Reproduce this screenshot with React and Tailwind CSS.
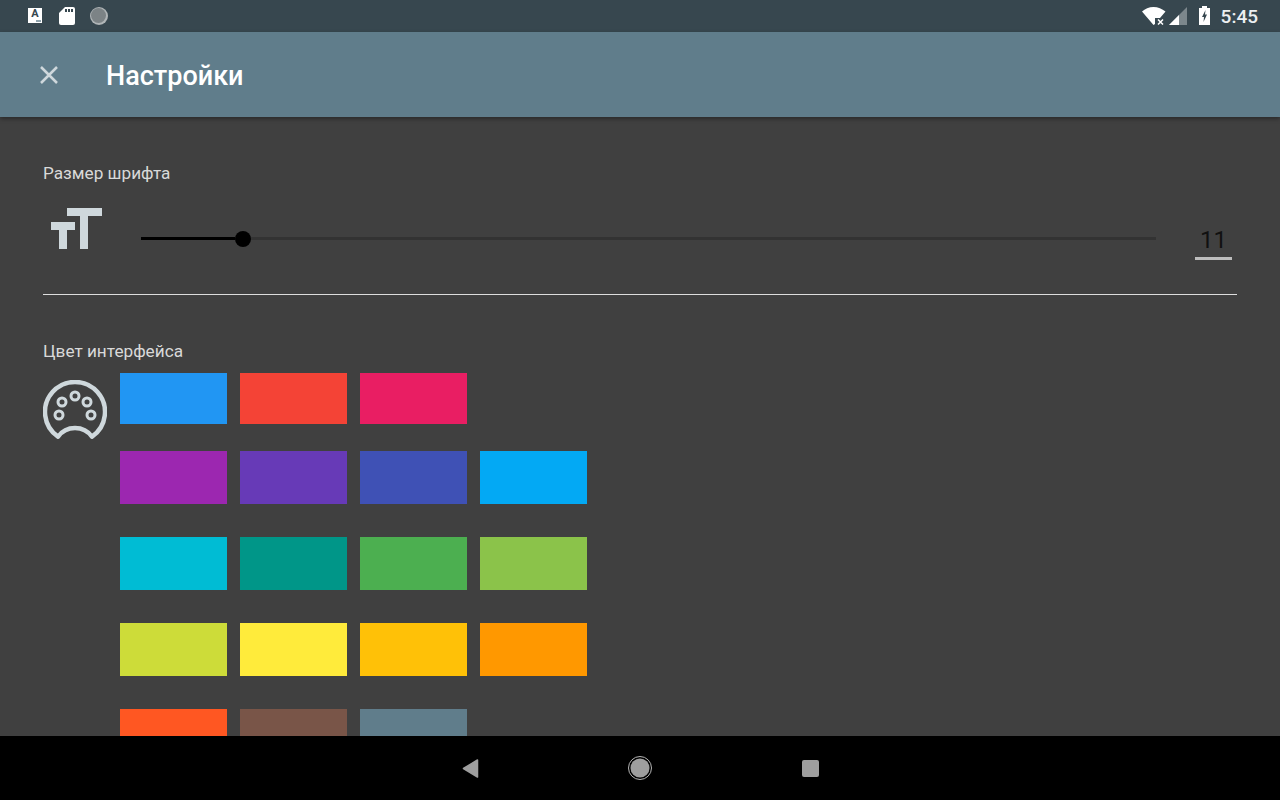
const swatchRows = [
  { height: "h-[51px]", colors: ["bg-[#2196f3]", "bg-[#f44336]", "bg-[#e91e63]"] },
  { height: "h-[53px]", colors: ["bg-[#9c27b0]", "bg-[#673ab7]", "bg-[#3f51b5]", "bg-[#03a9f4]"] },
  { height: "h-[53px]", colors: ["bg-[#00bcd4]", "bg-[#009688]", "bg-[#4caf50]", "bg-[#8bc34a]"] },
  { height: "h-[53px]", colors: ["bg-[#cddc39]", "bg-[#ffeb3b]", "bg-[#ffc107]", "bg-[#ff9800]"] },
  { height: "h-[53px]", colors: ["bg-[#ff5722]", "bg-[#795548]", "bg-[#607d8b]"] },
];

const StatusBar = () => (
  <div className="flex h-[32px] shrink-0 items-center bg-[#37474f] pl-[28px] pr-[22px]">
    <div className="relative -mt-px h-[15px] w-[14px] bg-white text-center text-[11px] font-bold leading-[12px] text-[#37474f]">
      A
      <div className="absolute bottom-[1px] right-[1px] h-[2px] w-[5px] bg-[#90a4ae]" />
    </div>
    <svg className="ml-[17px]" width="16" height="18" viewBox="0 0 16 18">
      <path d="M6 0H14a2 2 0 0 1 2 2V16a2 2 0 0 1-2 2H2a2 2 0 0 1-2-2V6z" fill="#fff" />
      <rect x="6" y="2" width="2" height="3" fill="#37474f" />
      <rect x="9" y="2" width="2" height="3" fill="#37474f" />
      <rect x="12" y="2" width="2" height="3" fill="#37474f" />
    </svg>
    <svg className="ml-[15px]" width="18" height="18" viewBox="0 0 18 18">
      <circle cx="9" cy="9" r="9" fill="#b0b5b7" />
      <circle cx="8.500" cy="8.500" r="7.500" fill="#7c8386" />
    </svg>
    <div className="ml-auto flex items-center">
      <svg width="24" height="18" viewBox="0 0 24 18">
        <path d="M0 4.500C3 1.800 7 0 11.500 0S20 1.800 23.500 4.500L18 11H13V17L11.500 18z" fill="#fff" />
        <path d="M16 12.500l5 5M21 12.500l-5 5" stroke="#fff" strokeWidth="1.500" />
      </svg>
      <svg className="ml-[3px]" width="18" height="18" viewBox="0 0 18 18">
        <path d="M0 18L18 0V18z" fill="#fff" fillOpacity="0.35" />
        <path d="M0 18L10 8V18z" fill="#fff" />
      </svg>
      <svg className="ml-[12px] -mt-[2px]" width="11" height="19" viewBox="0 0 11 19">
        <path d="M3 0H8V2H11V19H0V2H3z" fill="#fff" />
        <path d="M6.500 4L3 11H5L4.500 16L8 8.500H6z" fill="#37474f" />
      </svg>
      <span className="ml-[11px] text-[19px] font-medium leading-none text-[#eceff1]">5:45</span>
    </div>
  </div>
);

const Header = () => (
  <div className="z-10 flex h-[85px] shrink-0 items-center bg-[#607d8b] pl-[40px] shadow-[0_2px_4px_rgba(0,0,0,0.35)]">
    <svg width="18" height="18" viewBox="0 0 18 18">
      <path d="M1 1L17 17M17 1L1 17" stroke="#cfd8dc" strokeWidth="2.500" />
    </svg>
    <h1 className="ml-[48px] mt-[3px] text-[27px] font-medium leading-none text-white">Настройки</h1>
  </div>
);

const FontSizeIcon = () => (
  <svg width="51" height="41" viewBox="0 0 51 41">
    <path d="M16 0H51V8H37V41H29V8H16z" fill="#cfd8dc" />
    <path d="M0 14H24V22H16V41H8V22H0z" fill="#cfd8dc" />
  </svg>
);

const PaletteIcon = () => (
  <svg width="64" height="60" viewBox="0 0 64 60" fill="none" stroke="#cfd8dc">
    <path
      d="M15 56.700A30 30 0 1 1 49 56.700A21 21 0 0 0 15 56.700z"
      strokeWidth="4.500"
      strokeLinejoin="round"
    />
    <circle cx="32" cy="16" r="4" strokeWidth="3" />
    <circle cx="19" cy="22" r="4" strokeWidth="3" />
    <circle cx="44" cy="22" r="4" strokeWidth="3" />
    <circle cx="16" cy="35" r="4" strokeWidth="3" />
    <circle cx="48" cy="35" r="4" strokeWidth="3" />
  </svg>
);

const NavBar = () => (
  <div className="flex h-[64px] shrink-0 items-center justify-center bg-black">
    <svg width="17" height="19" viewBox="0 0 17 19">
      <path d="M15.500 1L1.500 9.500L15.500 18z" fill="#9e9e9e" stroke="#9e9e9e" strokeWidth="1.500" strokeLinejoin="round" />
    </svg>
    <svg className="ml-[149px]" width="24" height="24" viewBox="0 0 24 24">
      <circle cx="12" cy="12" r="11.500" fill="none" stroke="#b5b5b5" strokeWidth="1" />
      <circle cx="12" cy="12" r="9.500" fill="#9e9e9e" />
    </svg>
    <div className="ml-[150px] h-[17px] w-[17px] rounded-[2px] bg-[#9e9e9e]" />
  </div>
);

export default function App() {
  return (
    <div className="flex h-[800px] w-[1280px] flex-col overflow-hidden bg-[#404040] font-['Roboto',sans-serif]">
      <StatusBar />
      <Header />
      <div className="min-h-0 flex-1 overflow-hidden px-[43px]">
        <p className="mt-[46px] text-[17.2px] leading-[20px] text-[#d9d9d9]">Размер шрифта</p>
        <div className="mt-[16px] flex items-start">
          <div className="ml-[8px] mt-[9px]">
            <FontSizeIcon />
          </div>
          <div className="ml-[39px] mt-[32px] flex h-[16px] w-[1015px] items-center">
            <div className="mb-px h-[3px] w-[94px] bg-black" />
            <div className="h-[16px] w-[16px] rounded-full bg-black" />
            <div className="mb-px h-[3px] flex-1 bg-[#333333]" />
          </div>
          <div className="ml-[39px] mt-[26px] h-[35px] w-[37px] border-b-[3px] border-[#bdbdbd] text-center text-[24px] leading-[30px] text-[#111111]">
            11
          </div>
        </div>
        <div className="mt-[34px] h-px w-[1194px] bg-[#dedede]" />
        <p className="mt-[46px] text-[17.2px] leading-[20px] text-[#d9d9d9]">Цвет интерфейса</p>
        <div className="mt-[12px] flex items-start">
          <div className="mt-[7px]">
            <PaletteIcon />
          </div>
          <div className="ml-[13px] flex flex-col gap-y-[33px]">
            {swatchRows.map((row, i) => (
              <div key={i} className={`flex gap-x-[13px] ${i === 0 ? "-mb-[6px]" : ""}`}>
                {row.colors.map((color) => (
                  <div key={color} className={`w-[107px] ${row.height} ${color}`} />
                ))}
              </div>
            ))}
          </div>
        </div>
      </div>
      <NavBar />
    </div>
  );
}
